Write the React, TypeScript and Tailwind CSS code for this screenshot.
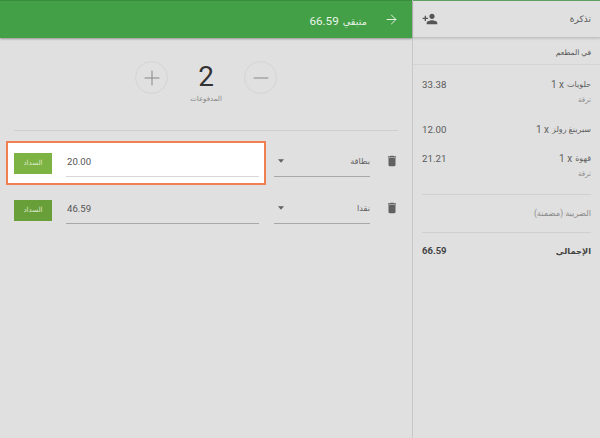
import { ArrowRight, Minus, Plus } from "lucide-react";

const font = "font-['Roboto','DejaVu_Sans',sans-serif]";

function TrashIcon() {
  return (
    <svg width="14" height="14" viewBox="0 0 24 24" fill="#616161">
      <path d="M6 19c0 1.1.9 2 2 2h8c1.1 0 2-.9 2-2V7H6v12zM19 4h-3.5l-1-1h-5l-1 1H5v2h14V4z" />
    </svg>
  );
}

function AddPersonIcon() {
  return (
    <svg width="16" height="16" viewBox="0 0 24 24" fill="#555">
      <path d="M15 12c2.21 0 4-1.79 4-4s-1.79-4-4-4-4 1.79-4 4 1.79 4 4 4zm-9-2V7H4v3H1v2h3v3h2v-3h3v-2H6zm9 4c-2.67 0-8 1.34-8 4v2h16v-2c0-2.66-5.33-4-8-4z" />
    </svg>
  );
}

function ItemRow({
  name,
  price,
  note,
  className,
}: {
  name: string;
  price: string;
  note?: string;
  className?: string;
}) {
  return (
    <div className={"flex justify-between " + (className ?? "")}>
      <div>
        <div className="flex items-center gap-[3px] text-[10px] leading-[14px] text-[#616161]">
          <span className="text-[8px]">{name}</span>
          <span dir="ltr">1 x</span>
        </div>
        {note && <div className="mt-[2px] text-[7px] leading-[12px] text-[#8a8a8a]">{note}</div>}
      </div>
      <span dir="ltr" className="text-[9.7px] leading-[14px] text-[#5a5a5a]">
        {price}
      </span>
    </div>
  );
}

function Row({ method, amount, active }: { method: string; amount: string; active?: boolean }) {
  return (
    <div className="flex h-[44px] items-start">
      <div className="flex w-[29px] shrink-0 justify-start pt-[13px]">
        <TrashIcon />
      </div>
      <div className="mt-[10px] flex h-[26px] w-[96px] shrink-0 items-start justify-between border-b border-[#a8a8a8] pt-[1px]">
        <span className="text-[8.2px] leading-[18px] text-[#616161]">{method}</span>
        <svg className="ml-[4px] mt-[7px]" width="6" height="4" viewBox="0 0 7 4" fill="#616161">
          <path d="M0 0h7L3.5 4z" />
        </svg>
      </div>
      <div
        className={
          "mr-[8px] flex h-[44px] w-[260px] shrink-0 items-start gap-[14px] border-2 pr-[5px] pt-[10px] " +
          (active ? "border-[#f0804f] bg-white" : "border-transparent")
        }
      >
        <div
          dir="ltr"
          className={
            "h-[24px] w-[193px] shrink-0 border-b pl-[1px] text-left text-[9.6px] leading-[17px] text-[#555] " +
            (active ? "border-[#d8d8d8]" : "border-[#a8a8a8]")
          }
        >
          {amount}
        </div>
        <button
          className={
            "flex h-[21px] w-[38px] shrink-0 items-center justify-center text-[7px] text-[#dfe9cf] " +
            (active ? "bg-[#7cb342]" : "bg-[#689f38]")
          }
        >
          السداد
        </button>
      </div>
    </div>
  );
}

export default function App() {
  return (
    <div dir="rtl" className={"flex h-[438px] w-[600px] overflow-hidden bg-[#e0e0e0] " + font}>
      {/* Ticket */}
      <aside className="flex w-[188px] shrink-0 flex-col border-l border-[#c8c8c8]">
        <header className="flex h-[38px] shrink-0 items-center justify-between border-b border-t border-b-[#c4c4c4] border-t-[#5f9f62] px-[9px] shadow-[0_1px_2px_rgba(0,0,0,0.12)]">
          <span className="pt-[2px] text-[9px] text-[#555]">تذكرة</span>
          <AddPersonIcon />
        </header>
        <div className="flex h-[27px] shrink-0 items-center border-b border-[#d4d4d4] pr-[9px] pt-[4px] text-[7.5px] text-[#555]">
          في المطعم
        </div>
        <div className="px-[9px] pt-[13px]">
          <ItemRow name="حلويات" price="33.38" note="ترقة" />
          <ItemRow name="سبرينغ رولز" price="12.00" className="mt-[17px]" />
          <ItemRow name="قهوة" price="21.21" note="ترقة" className="mt-[15px]" />
          <div className="mt-[14px] h-px bg-[#d0d0d0]" />
          <div className="flex h-[37px] items-center text-[8.3px] text-[#8a8a8a]">الضريبة (مضمنة)</div>
          <div className="h-px bg-[#d0d0d0]" />
          <div className="flex h-[37px] items-center justify-between font-bold text-[#444]">
            <span className="text-[8.3px]">الإجمالي</span>
            <span dir="ltr" className="text-[9.5px]">66.59</span>
          </div>
        </div>
      </aside>

      {/* Payments */}
      <main className="flex flex-1 flex-col">
        <header className="flex h-[38px] shrink-0 items-center border-t border-[#388e3c] bg-[#43a047] pr-[13px] text-white shadow-[0_1px_2px_rgba(0,0,0,0.35)]">
          <ArrowRight size={15} strokeWidth={1.5} className="text-[#eef6ee]" />
          <span className="mr-[17px] text-[#e8f3e8]">
            <span className="text-[9.8px]">متبقي</span> <span className="text-[11.7px]">66.59</span>
          </span>
        </header>
        <div className="flex h-[92px] shrink-0 items-start justify-center pt-[24px]">
          <button className="mt-[-1px] flex h-[33px] w-[33px] items-center justify-center rounded-full border border-[#d4d4d4]">
            <Minus size={24} strokeWidth={1} className="text-[#888]" />
          </button>
          <div className="mx-[17px] flex w-[42px] flex-col items-center">
            <span className="text-[28px] leading-[30px] text-[#333]">2</span>
            <span className="mt-[1px] text-[7px] leading-[12px] text-[#888]">المدفوعات</span>
          </div>
          <button className="mt-[-1px] flex h-[33px] w-[33px] items-center justify-center rounded-full border border-[#d4d4d4]">
            <Plus size={24} strokeWidth={1} className="text-[#888]" />
          </button>
        </div>
        <div className="mx-[14px] h-px bg-[#cfcfcf]" />
        <div className="mr-[13px] mt-[10px] flex flex-col gap-[3px]">
          <Row method="بطاقة" amount="20.00" active />
          <Row method="نقدا" amount="46.59" />
        </div>
      </main>
    </div>
  );
}
